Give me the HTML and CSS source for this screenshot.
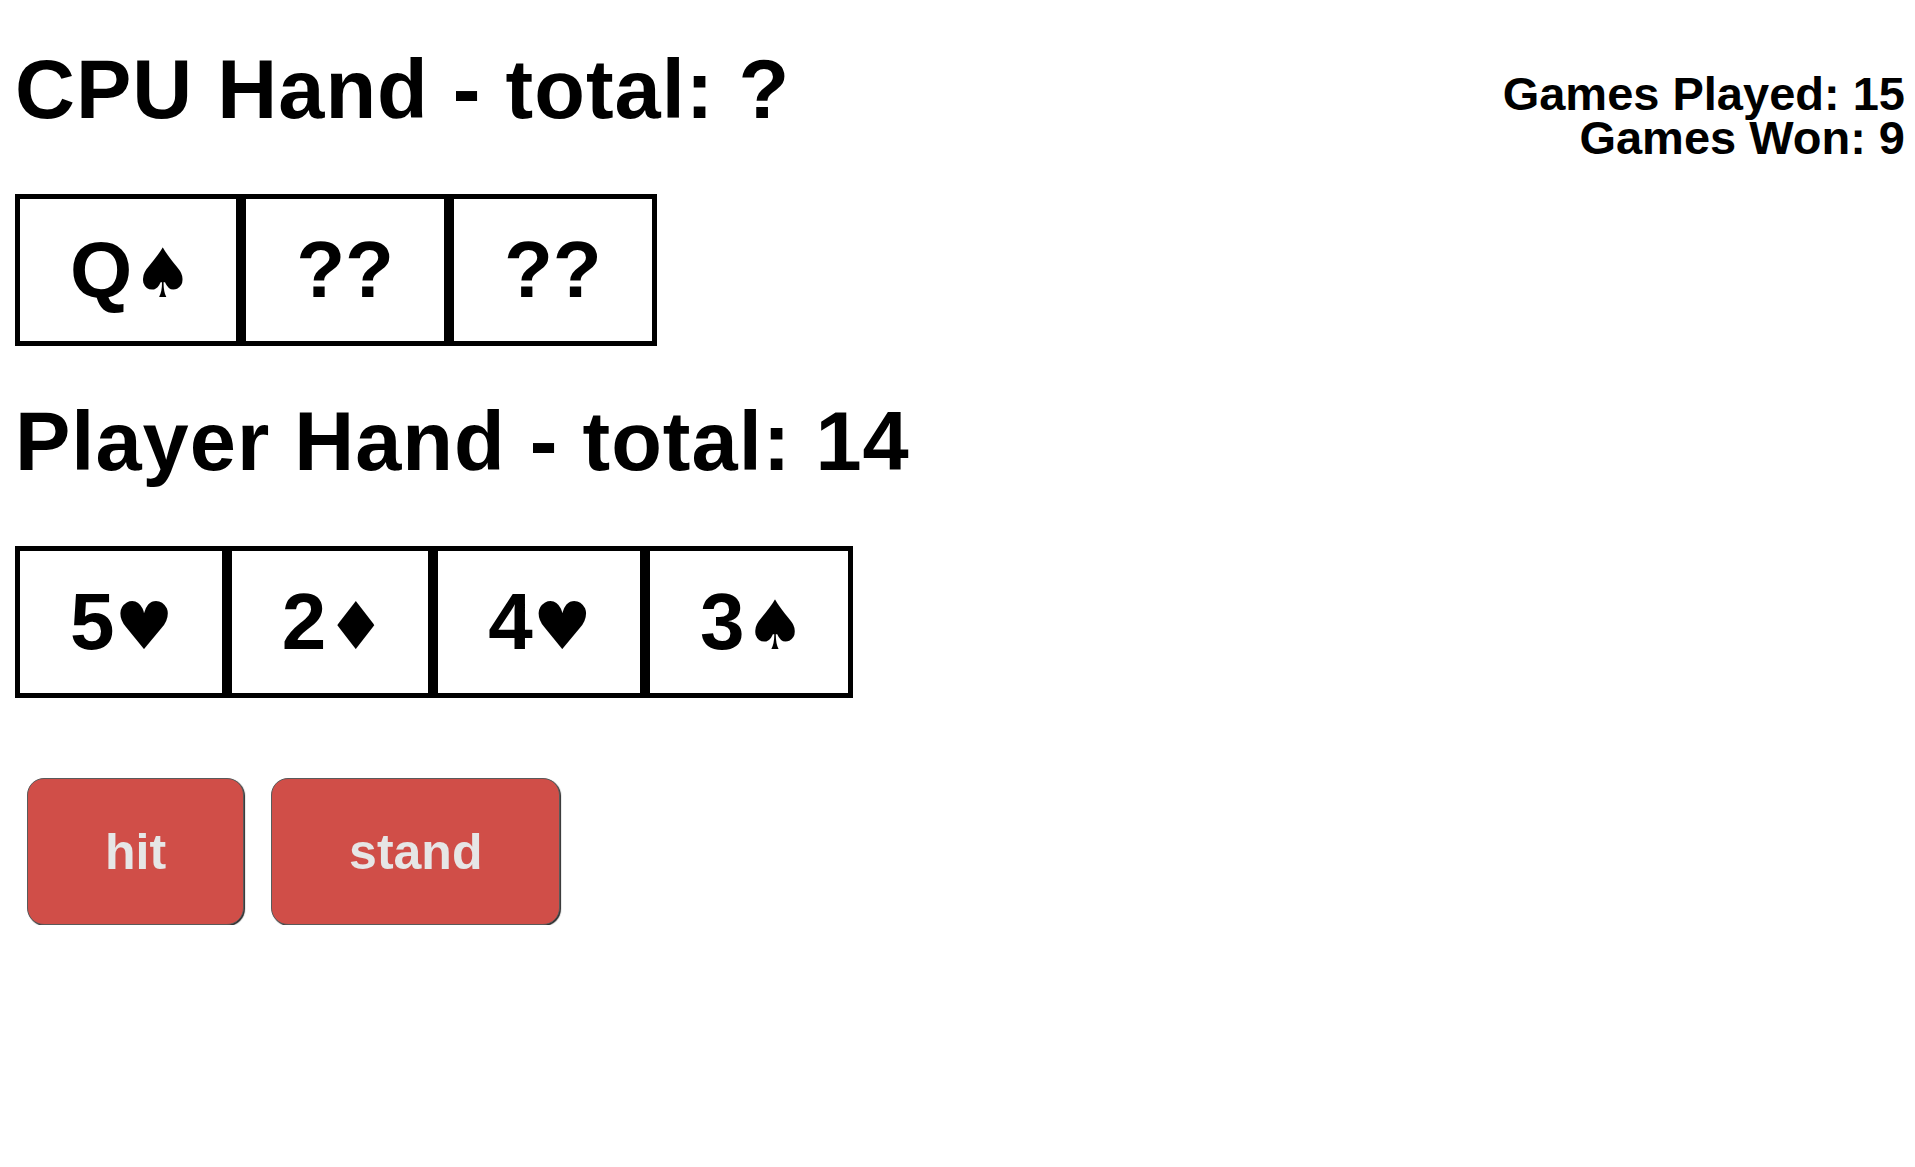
FILE: index.html
```html
<!DOCTYPE html>
<html lang="en">
<head>
<meta charset="utf-8">
<title>Blackjack</title>
<link rel="stylesheet" href="styles.css">
</head>
<body>
<div class="page">
  <div class="top">
    <h1 class="title">CPU Hand - total: ?</h1>
    <div class="stats">
      <div class="stat">Games Played: 15</div>
      <div class="stat">Games Won: 9</div>
    </div>
  </div>
  <div class="hand cpu-hand">
    <div class="card">Q<span class="suit spade">♠</span></div>
    <div class="card">??</div>
    <div class="card">??</div>
  </div>
  <h1 class="title">Player Hand - total: 14</h1>
  <div class="hand">
    <div class="card">5<span class="suit heart">♥</span></div>
    <div class="card">2<span class="suit diamond">♦</span></div>
    <div class="card">4<span class="suit heart">♥</span></div>
    <div class="card">3<span class="suit spade">♠</span></div>
  </div>
  <div class="actions">
    <button class="btn">hit</button>
    <button class="btn">stand</button>
  </div>
</div>
</body>
</html>
```

FILE: styles.css
```css
html, body {
  margin: 0;
  padding: 0;
  background: #fff;
}
body {
  font-family: "Liberation Sans", Arial, Helvetica, sans-serif;
  color: #000;
}
.page {
  padding: 42px 10px 0 15px;
}
.top {
  display: flex;
  justify-content: space-between;
  align-items: flex-start;
}
.title {
  margin: 0 0 57px;
  font-size: 83px;
  font-weight: 700;
  letter-spacing: 1px;
  line-height: 95px;
}
.stats {
  margin-top: 30px;
  text-align: right;
  font-size: 47px;
  font-weight: 700;
  line-height: 44px;
}
.hand {
  display: flex;
  align-items: stretch;
}
.cpu-hand {
  margin-bottom: 48px;
}
.card {
  border: 5px solid #000;
  padding: 25px 50px;
  font-size: 80px;
  font-weight: 700;
  line-height: 92px;
  white-space: nowrap;
}
.suit {
  font-family: "DejaVu Sans", sans-serif;
  font-size: 66px;
  line-height: 1px;
}
.suit.heart {
  letter-spacing: -2px;
}
.suit.diamond {
  letter-spacing: -7px;
}
.suit.spade {
  font-size: 68px;
  letter-spacing: -7px;
}
.actions {
  display: flex;
  gap: 27px;
  margin-top: 80px;
  padding-left: 12px;
}
.btn {
  height: 147px;
  padding: 0 77px;
  background: #d04e48;
  color: #e6e6e6;
  font-family: "Liberation Sans", Arial, sans-serif;
  font-size: 50px;
  font-weight: 700;
  border: 1.5px solid #5a5a5a;
  border-radius: 17px;
  box-shadow: 1px 1px 1px rgba(0, 0, 0, 0.85);
  cursor: pointer;
}
```
